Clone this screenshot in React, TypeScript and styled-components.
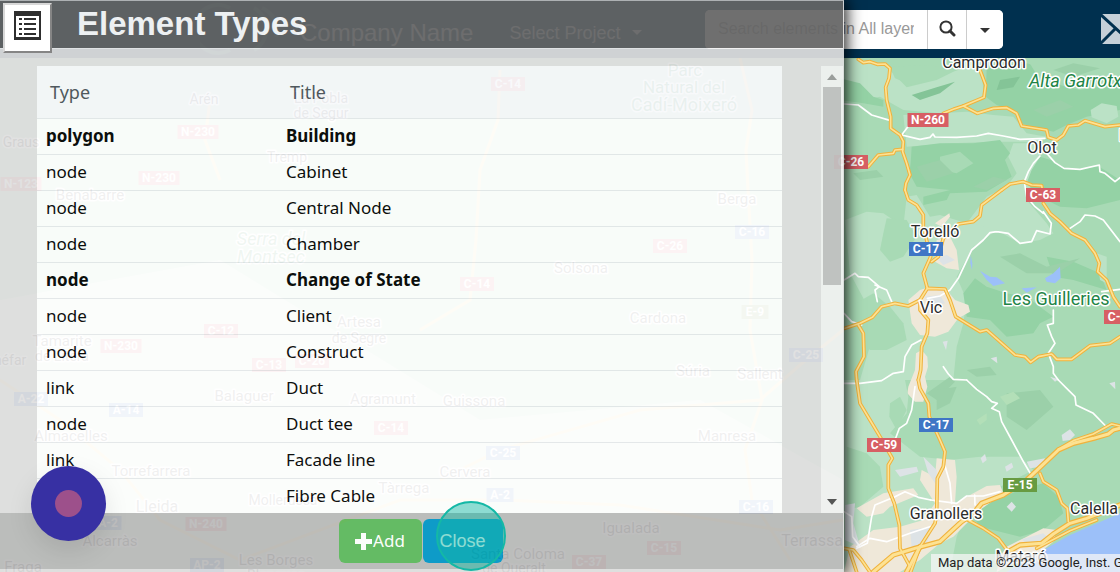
import React from "react";
import styled, { createGlobalStyle } from "styled-components";

const GlobalStyle = createGlobalStyle`
  *, *::before, *::after { box-sizing: border-box; }
  html, body { margin: 0; padding: 0; overflow: hidden; }
  body { font-family: "Liberation Sans", Arial, sans-serif; }
  button, input { font: inherit; }
`;

/* ---------- page frame ---------- */

const Page = styled.div`
  position: relative;
  display: flex;
  flex-direction: column;
  height: 100vh;
  overflow: hidden;
`;

const NavBar = styled.header`
  flex: none;
  display: flex;
  align-items: center;
  height: 58px;
  padding-left: 200px;
  background: #00304f;
  color: #fff;
  overflow: hidden;
`;

const Logo = styled.svg`
  flex: none;
  width: 84px;
  height: 52px;
  margin-right: 16px;
`;

const Company = styled.span`
  flex: none;
  font-size: 24px;
  line-height: 32px;
  padding-top: 7px;
  color: #dbe4ea;
`;

const ProjectButton = styled.button`
  flex: none;
  display: flex;
  align-items: center;
  gap: 12px;
  margin-left: 36px;
  padding: 7px 0 0;
  border: 0;
  background: none;
  color: #dbe4ea;
  font-size: 18px;
  line-height: 24px;
`;

const Caret = styled.span`
  width: 0;
  height: 0;
  border: 5px solid transparent;
  border-top-color: currentColor;
  border-bottom: 0;
`;

const SearchGroup = styled.form`
  flex: none;
  display: flex;
  height: 39px;
  margin-left: auto;
  border-radius: 5px;
  background: #fff;
  overflow: hidden;
`;

const SearchInput = styled.input`
  width: 222px;
  padding: 0 13px;
  border: 0;
  background: #fff;
  font-size: 16px;
  &::placeholder { color: #999; opacity: 1; }
`;

const SearchButton = styled.button<{ $width: number }>`
  display: flex;
  align-items: center;
  justify-content: center;
  width: ${(p) => p.$width}px;
  padding: 0;
  border: 0;
  border-left: 1px solid #ccc;
  background: #fff;
  color: #333;
`;

const SearchOptions = styled(SearchButton)`
  padding-top: 3px;
`;

const MailButton = styled.button`
  flex: none;
  margin: 0 -25px 0 98px;
  padding: 0;
  border: 0;
  background: none;
  line-height: 0;
`;

/* ---------- map ---------- */

const MapArea = styled.main`
  position: relative;
  flex: 1;
  min-height: 0;
  background: #a8dab5;
`;

const MapCanvas = styled.svg`
  display: block;
  width: 100%;
  height: 100%;
  font-family: Roboto, "Liberation Sans", sans-serif;
`;

const Attribution = styled.small`
  position: absolute;
  right: 0;
  bottom: 0;
  width: 189px;
  padding-left: 7px;
  overflow: hidden;
  white-space: nowrap;
  background: rgba(245, 245, 245, 0.75);
  color: #222;
  font: 13px/18px Roboto, "Liberation Sans", sans-serif;
`;

type Pts = string[];
interface TileData {
  y: number;
  areas: [string, string][];
  white: Pts;
  yellow: Pts;
  wide?: Pts;
}

const LIGHT = "#bbe2c6";
const DARK = "#94d2a5";
const MID = "#a8dab5";
const SHADE = "#9bd0a9";
const URBAN = "#efe8d9";
const GREY = "#dde3e6";
const WATER = "#9cc0f9";

const tiles: TileData[] = [
  {
    y: 0,
    areas: [
      [LIGHT, "0,175 60,178 140,200 200,262 290,240 340,215 395,195 425,215 432,290 370,318 300,340 190,330 120,290 60,300 0,260"],
      [MID, "150,200 260,195 330,205 290,235 215,255 165,235"],
      [DARK, "0,235 60,250 100,290 130,300 130,320 70,310 0,300"],
      [DARK, "440,205 560,190 840,265 840,330 740,350 680,375 640,395 548,372 530,335 470,315 437,290"],
      [MID, "560,175 840,175 840,250 720,270 600,240"],
      [LIGHT, "752,330 785,310 830,318 835,350 800,370 755,352"],
      [LIGHT, "190,345 380,335 460,345 520,350 560,400 620,410 600,425 470,425 330,430 200,440"],
      [LIGHT, "520,430 590,430 600,470 580,520 560,600 620,670 640,700 600,720 540,730 470,690 420,700 380,670 440,590 500,560 530,520 505,470"],
      [DARK, "215,440 300,430 400,430 480,420 510,460 495,480 515,530 440,575 330,580 320,600 250,615 250,590 330,570 230,560 208,520 212,490"],
      [MID, "300,470 360,455 400,490 350,520 300,510"],
      [DARK, "575,510 600,470 640,482 672,508 778,500 840,540 840,600 740,625 660,620 600,590 560,550"],
      [SHADE, "230,500 300,480 340,520 260,545"],
      [SHADE, "400,560 460,530 500,540 440,570"],
      [SHADE, "20,480 80,470 60,500"],
      [SHADE, "40,520 110,510 130,530 60,540"],
      ["#84c497", "215,285 290,262 345,245 300,280 240,300"],
      ["#84c497", "480,240 540,230 520,262 470,270"],
      [SHADE, "580,330 660,300 700,320 620,350"],
      [SHADE, "640,210 700,190 780,205 700,230"],
    ],
    white: [
      "12,312 55,315 95,345 152,362",
      "172,402 240,418 270,412 279,402 285,411 350,412 410,408 445,400 490,408 540,418 615,415",
      "600,468 580,490 565,515 553,545 560,590 585,620 610,640",
      "622,462 645,488 672,505 720,508 778,495 780,515 795,520 825,545 840,533",
      "185,405 210,372",
    ],
    yellow: [
      "55,178 70,188 90,185 112,193 135,192 150,205 147,235 137,262 140,300 152,350 152,385 180,405 190,425 188,455 200,490 210,525 198,550 195,570",
      "310,340 340,328 370,318 432,292 437,255 420,210",
      "370,318 412,340 460,325 500,323 530,340 545,378 620,390 625,412 650,420 670,405 685,378 715,375 735,362 795,380 840,375",
      "85,500 115,465 160,460 165,450 188,448",
      "485,570 510,552 550,545 575,555 605,557 612,600",
    ],
  },
  {
    y: 570,
    areas: [
      [LIGHT, "15,90 80,65 130,70 190,110 200,20 230,15 270,80 300,75 380,100 440,110 470,120 400,170 350,260 380,330 370,400 350,470 340,570 60,570 110,400 30,250"],
      [MID, "140,85 200,90 230,140 190,200 150,215 120,180 130,130"],
      [MID, "30,350 100,310 150,350 190,400 200,450 140,480 90,480 50,440"],
      [DARK, "405,265 440,290 500,310 560,320 640,380 600,400 580,430 500,440 450,390 380,380 370,310"],
      [DARK, "620,200 700,215 780,250 800,300 700,270 640,260"],
      [SHADE, "480,200 540,190 620,230 720,205 650,250 560,250"],
      [LIGHT, "770,190 800,200 800,280 780,270"],
      [URBAN, "285,100 328,70 330,80 305,110"],
      [URBAN, "290,150 330,140 350,180 357,240 320,235 285,215"],
      [GREY, "290,205 320,195 345,210 310,225"],
      [URBAN, "205,330 240,300 270,290 320,300 345,330 385,345 390,365 355,385 325,425 285,440 240,435 215,400"],
      [GREY, "255,320 300,315 315,340 270,350"],
      [URBAN, "228,490 245,480 262,500 264,530 255,560 262,590 250,635 225,635 202,610 205,590 225,540"],
      [WATER, "420,242 450,260 470,262 495,280 460,288 440,270"],
      [WATER, "615,265 640,250 660,230 662,265 645,280 620,275"],
      [WATER, "392,195 397,220 396,240 391,220"],
      [WATER, "545,295 590,292 560,308"],
      [SHADE, "260,610 330,560 345,575 290,630"],
      [SHADE, "380,540 450,530 470,555 410,560"],
      [GREY, "308,455 323,452 318,480"],
      [GREY, "452,505 470,500 472,520"],
      [GREY, "630,560 655,568 645,575"],
    ],
    white: [
      "262,325 300,318 330,300 355,265 395,180 430,150 450,128 470,125 505,130 540,160 575,155 590,122 630,132 634,100 610,65",
      "690,115 720,95 735,75 765,78 790,90 840,155",
      "12,270 45,250 55,260 85,262 118,290 105,300 112,335",
      "105,285 140,300 155,335",
      "640,360 640,400 622,405 635,440 645,460 625,490 640,530 640,550 655,570",
      "243,450 215,465 195,500 190,545 160,550 125,572 60,580 12,580",
      "310,530 325,552 340,568 380,570",
      "12,370 35,395 65,405",
      "785,305 840,298",
    ],
    yellow: [
      "195,0 205,30 230,45 250,75 250,110 272,200 250,250 262,295",
      "275,215 295,200 310,145 355,102 400,95 420,78 425,45 485,0",
      "15,415 60,400 97,382 125,350 165,340 205,348 240,330 262,295 315,297 330,330 347,380 420,425 440,420 525,495 555,500 572,517 595,500 635,492 650,508 695,508 750,467 810,460 840,440",
      "610,40 630,70 660,95 695,130 735,150 765,190 778,220 773,245 800,270 820,320 840,350",
      "55,405 70,430 72,500 48,545 50,570",
      "240,330 240,360 265,390 262,430 245,470 242,540 235,570",
    ],
  },
  {
    y: 1140,
    areas: [
      [LIGHT, "12,0 195,0 205,50 200,100 150,160 240,230 330,240 420,230 540,230 580,270 480,320 400,350 350,470 330,576 12,576"],
      [MID, "20,200 80,220 120,260 130,320 60,380 20,390"],
      [MID, "150,70 180,50 200,90 170,150 148,110"],
      [MID, "215,90 370,40 430,70 470,150 520,210 440,230 330,220 240,180"],
      [SHADE, "290,30 350,20 330,70 290,90"],
      [SHADE, "500,40 600,30 640,80 560,150 500,110"],
      ["#b3dfb8", "480,50 520,35 540,55 500,75"],
      ["#b3dfb8", "410,120 440,100 440,120 420,135"],
      [DARK, "420,380 540,330 610,310 655,350 670,400 610,450 540,470 420,440 400,410"],
      [MID, "370,440 430,450 500,520 480,560 330,576"],
      [URBAN, "290,235 345,240 350,290 345,370 400,340 440,318 480,315 490,340 420,390 390,420 340,470 300,490 240,540 180,576 12,576 30,500 100,450 180,440 250,420 285,370 240,300 245,270 285,290"],
      [URBAN, "50,385 130,340 220,325 235,345 150,380 130,400 80,410"],
      [GREY, "15,375 45,370 40,430 60,500 15,480"],
      [GREY, "165,270 230,260 235,275 180,290"],
      [GREY, "250,230 290,270 292,320 265,280"],
      [GREY, "210,450 280,440 260,490 215,500"],
      [GREY, "665,165 690,148 705,165 690,180 668,183"],
      [GREY, "422,235 435,222 440,240 428,250"],
      [GREY, "500,380 515,365 528,380 515,395"],
      [GREY, "560,245 615,235 605,260 570,265"],
      [GREY, "495,260 515,248 520,262 500,275"],
      [GREY, "808,10 825,5 826,28"],
      [URBAN, "500,500 560,470 610,445 650,450 640,485 590,525 500,560 470,576 480,530"],
      [GREY, "545,478 610,460 625,475 570,500"],
      [WATER, "500,576 600,515 690,465 840,400 840,576"],
    ],
    white: [
      "380,0 410,28 440,50 455,65 472,70 455,85 478,95 485,125 515,180 550,245 572,282",
      "655,0 680,25 705,50 708,75 760,100 797,138",
      "225,20 215,90 200,130 178,145 165,180",
      "315,258 330,310 335,370",
      "272,360 235,352 195,335 165,350 105,375 95,410 82,490 50,505",
      "272,360 350,370 380,348 430,348 480,335",
      "50,500 90,475 140,485 210,460 285,435",
      "12,395 35,410 38,470 60,500",
      "404,345 405,375",
    ],
    yellow: [
      "50,0 60,70 90,120 120,170 157,235 145,255 145,325 163,370 178,435 180,505 210,560",
      "235,0 240,25 265,70 268,110 300,180 315,215 310,260 292,295 290,400 285,430 240,500 212,576",
      "600,280 610,305 650,330 665,370 682,385 685,425",
      "380,418 430,445 475,475 505,515",
      "590,505 690,452 770,420",
      "12,505 40,510 65,540 90,576",
      "28,510 50,576",
    ],
    wide: [
      "100,576 160,525 225,505 300,485 365,425 400,400 425,370 490,345 560,300 600,262 655,210 700,190 760,175 805,162 820,150 840,145",
      "505,515 540,495 605,490 640,462 690,430 740,415 780,400 840,375",
      "200,576 240,500",
    ],
  },
];

const upperBranch = "655,208 700,182 760,162 815,132 840,138";
tiles[2].yellow.push(upperBranch);

const toPath = (p: string) => "M" + p.split(" ").join("L");

const placeTile = (y: number) => `translate(840 0) scale(0.33333) translate(0 ${y})`;

const TileAreas = ({ data }: { data: TileData }) => (
  <g transform={placeTile(data.y)}>
    {data.areas.map(([fill, pts], i) => (
      <polygon key={i} points={pts} fill={fill} />
    ))}
  </g>
);

interface RoadProps {
  data: TileData;
  kind: "white" | "yellow" | "wide";
  color: string;
  width: number;
}

const TileRoads = ({ data, kind, color, width }: RoadProps) => (
  <g
    transform={placeTile(data.y)}
    fill="none"
    stroke={color}
    strokeWidth={width}
    strokeLinejoin="round"
    strokeLinecap="round"
  >
    {(data[kind] ?? []).map((p) => <path key={p} d={toPath(p)} />)}
  </g>
);

const roadPasses: Omit<RoadProps, "data">[] = [
  { kind: "white", color: "#fff", width: 5 },
  { kind: "yellow", color: "#f0b23c", width: 11 },
  { kind: "wide", color: "#f0b23c", width: 16 },
  { kind: "yellow", color: "#fde293", width: 5 },
  { kind: "wide", color: "#fde293", width: 9 },
];

/* Towns: name, centre x, centre y, size */
const towns: [string, number, number, number][] = [
  ["Camprodon", 984, 63, 16], ["Olot", 1042, 148, 16], ["Torelló", 935, 232, 16],
  ["Vic", 931, 308, 16], ["Granollers", 946, 514, 16], ["Mataró", 1021, 557, 16],
  ["Calella", 1094, 509, 16], ["Banyoles", 1151, 136, 16],
  ["Arén", 204, 99, 14], ["La Pobla", 321, 98, 14], ["de Segur", 321, 113, 14],
  ["Graus", 21, 142, 14], ["Tremp", 287, 157, 14], ["Benabarre", 90, 195, 15],
  ["Artesa", 359, 322, 15], ["de Segre", 359, 338, 14], ["Tamarite", 62, 341, 15],
  ["de Litera", 62, 356, 14], ["Binéfar", 4, 360, 14], ["Balaguer", 244, 396, 15],
  ["Agramunt", 383, 399, 15], ["Guissona", 474, 401, 15], ["Berga", 737, 199, 15],
  ["Solsona", 581, 268, 15], ["Cardona", 658, 318, 15], ["Súria", 693, 371, 15],
  ["Sallent", 760, 374, 15], ["Almacelles", 71, 436, 15], ["Torrefarrera", 151, 471, 15],
  ["Lleida", 157, 507, 16], ["Mollerussa", 283, 500, 14], ["Tàrrega", 404, 488, 15],
  ["Cervera", 465, 472, 15], ["Manresa", 727, 436, 15], ["Igualada", 631, 528, 15],
  ["Terrassa", 812, 541, 16], ["Alcarràs", 110, 541, 15], ["Fraga", 23, 567, 15],
  ["Les Borges", 276, 560, 15], ["Blanques", 276, 575, 14],
  ["Santa Coloma", 518, 554, 15], ["de Queralt", 514, 568, 14],
];

const parks: [string, number, number, number, boolean][] = [
  ["Alta Garrotxa", 1080, 81, 18, true], ["Les Guilleries", 1056, 299, 18, false],
  ["Parc", 685, 70, 17, false], ["Natural del", 684, 87, 17, false],
  ["Cadí-Moixeró", 684, 105, 18, false], ["Serra del", 271, 239, 18, true],
  ["Montsec", 271, 257, 18, true],
];

const RED = "#d75f64";
const BLUE = "#3f76c5";
const GREEN = "#679b41";

const shields: [string, number, number, string][] = [
  ["N-260", 928, 120, RED], ["C-26", 851, 162, RED], ["C-63", 1043, 195, RED],
  ["C-17", 926, 249, BLUE], ["C-35", 1121, 317, RED], ["C-17", 936, 425, BLUE],
  ["C-59", 884, 445, RED], ["E-15", 1020, 485, GREEN],
  ["C-14", 508, 84, RED], ["N-230", 198, 132, RED], ["N-123", 21, 184, RED],
  ["N-230", 159, 178, RED], ["C-16", 752, 232, BLUE], ["C-26", 670, 246, RED],
  ["C-14", 477, 284, RED], ["C-12", 221, 331, RED], ["N-230", 121, 346, RED],
  ["C-13", 269, 365, RED], ["C-26", 312, 361, RED], ["A-22", 31, 399, BLUE],
  ["A-14", 126, 410, BLUE], ["C-14", 391, 428, RED], ["E-9", 755, 312, GREEN],
  ["C-25", 806, 355, BLUE], ["C-25", 503, 453, BLUE], ["A-2", 500, 495, BLUE],
  ["C-16", 756, 507, BLUE], ["A-2", 108, 523, BLUE], ["N-240", 206, 524, RED],
  ["AP-2", 207, 565, BLUE], ["C-15", 664, 548, RED], ["C-37", 589, 562, RED],
];

/* Stretches of road in the western half of the map. */
const westRoads = [
  "M740 58L752 110L746 150L748 190L752 260L750 330L762 400L745 450L752 500L790 560",
  "M500 70L498 120L480 170L476 240L470 300L420 330",
  "M210 100L205 140L220 180",
  "M0 380L60 420L120 470L160 520L240 560L400 500L500 500L620 505L780 530L843 520",
  "M843 330L800 365L760 400L640 410L500 450L440 480",
];

function RegionMap() {
  return (
    <MapCanvas viewBox="0 58 1120 514" preserveAspectRatio="xMinYMin slice" role="img" aria-label="Map">
      <polygon points="0,58 843,58 843,572 0,572" fill={MID} />
      <polygon points="0,300 220,260 480,420 700,400 843,480 843,572 0,572" fill="#d3e8d3" />
      <g fill="none" stroke="#fbd98a" strokeWidth={3}>
        {westRoads.map((d) => <path key={d} d={d} />)}
      </g>
      {tiles.map((t) => <TileAreas key={t.y} data={t} />)}
      {roadPasses.map((pass, i) => (
        <g key={i}>
          {tiles.map((t) => <TileRoads key={t.y} data={t} {...pass} />)}
        </g>
      ))}
      <g textAnchor="middle" stroke="#fff" strokeWidth={3} strokeLinejoin="round" paintOrder="stroke">
        {towns.map(([name, x, y, size]) => (
          <text key={name} x={x} y={y + 5} fontSize={size} fill="#2b2b2b">{name}</text>
        ))}
        {parks.map(([name, x, y, size, italic]) => (
          <text key={name} x={x} y={y + 6} fontSize={size} fill="#1e8446" fontStyle={italic ? "italic" : "normal"}>
            {name}
          </text>
        ))}
      </g>
      {shields.map(([name, x, y, fill]) => {
        const w = name.length * 7 + 6;
        return (
          <g key={name + x + y}>
            <rect x={x - w / 2} y={y - 7} width={w} height={14} fill={fill} />
            <text x={x} y={y + 4} textAnchor="middle" fontSize={12} fontWeight={700} fill="#fff">{name}</text>
          </g>
        );
      })}
    </MapCanvas>
  );
}

/* ---------- dialog ---------- */

const Dialog = styled.section`
  position: absolute;
  top: 0;
  left: 0;
  display: flex;
  flex-direction: column;
  width: calc(100% - 276px);
  height: 100%;
  padding-bottom: 3px;
  border-top: 1px solid #bbb;
  border-right: 1px solid #ddd;
  background: #dfdfdf;
  box-shadow: 0 0 15px 2px #000;
  opacity: 0.93;
`;

const DialogHeader = styled.div`
  flex: none;
  height: 48px;
  padding: 3px 0 0 77px;
  background: #656565;
  border-bottom: 1px solid #f0f0f0;
`;

const DialogTitle = styled.h1`
  margin: 0;
  padding-top: 2px;
  font-size: 33px;
  line-height: 36px;
  color: #fff;
`;

const MenuButton = styled.button`
  position: absolute;
  top: 3px;
  left: 3px;
  display: flex;
  justify-content: center;
  width: 49px;
  height: 50px;
  padding: 6px 0 0;
  border: 2px solid;
  border-color: #d8d8d8 #858585 #858585 #d8d8d8;
  background: #fff;
`;

const DialogBody = styled.div`
  flex: 1;
  display: flex;
  min-height: 0;
  padding: 17px 0 0 37px;
  overflow: hidden;
`;

const TableFrame = styled.div`
  flex: 1;
  margin-right: 39px;
  overflow: hidden;
`;

const TypeTable = styled.table`
  width: 100%;
  table-layout: fixed;
  border-collapse: collapse;
  background: #fff;
  font-family: "Noto Sans", "Open Sans", sans-serif;
  font-size: 17px;
  line-height: 24px;
  color: #000;
`;

const HeadCell = styled.th<{ $width?: number }>`
  width: ${(p) => (p.$width ? `${p.$width}px` : "auto")};
  height: 52px;
  padding: 0 13px;
  background: #f8f9fb;
  text-align: left;
  font-size: 18px;
  font-weight: 400;
  color: #495057;
`;

const Row = styled.tr<{ $strong?: boolean }>`
  font-weight: ${(p) => (p.$strong ? 700 : 400)};
`;

const Cell = styled.td`
  height: 36px;
  padding: 0 9px;
  border-top: 1px solid #e6e9eb;
`;

const ScrollTrack = styled.div`
  flex: none;
  display: flex;
  flex-direction: column;
  align-items: center;
  width: 22px;
  padding: 8px 0;
  background: #f2f2f2;
`;

const ScrollArrow = styled.span<{ $down?: boolean }>`
  width: 0;
  height: 0;
  border: 5px solid transparent;
  ${(p) =>
    p.$down
      ? "border-bottom: 0; border-top: 6px solid #4c4c4c; margin-top: auto;"
      : "border-top: 0; border-bottom: 6px solid #9a9a9a;"}
`;

const ScrollThumb = styled.span`
  width: 18px;
  height: 198px;
  margin-top: 7px;
  background: #c1c1c1;
`;

const DialogFooter = styled.div`
  flex: none;
  display: flex;
  align-items: center;
  justify-content: center;
  gap: 1px;
  height: 56px;
  padding-right: 2px;
  background: #bababa;
`;

const ActionButton = styled.button<{ $color: string; $width: number }>`
  display: flex;
  align-items: center;
  justify-content: center;
  gap: 1px;
  width: ${(p) => p.$width}px;
  height: 44px;
  padding: 0;
  border: 0;
  border-radius: 6px;
  background: ${(p) => p.$color};
  color: #fff;
  font-family: "Noto Sans", "Open Sans", sans-serif;
  font-size: 17px;
  line-height: 24px;
`;

const CloseLabel = styled.span`
  font-family: "Liberation Sans", Arial, sans-serif;
  font-size: 18px;
`;

/* ---------- floating markers ---------- */

const ClickRing = styled.span`
  position: absolute;
  left: calc(50% - 124px);
  bottom: 1px;
  width: 70px;
  height: 70px;
  border: 2px solid #14b8a6;
  border-radius: 50%;
  background: rgba(20, 184, 166, 0.48);
  pointer-events: none;
`;

const RecordButton = styled.button`
  position: absolute;
  left: 31px;
  bottom: 31px;
  display: flex;
  align-items: center;
  justify-content: center;
  width: 75px;
  height: 75px;
  padding: 0;
  border: 0;
  border-radius: 50%;
  background: #3730a3;
  box-shadow: 0 10px 26px rgba(0, 0, 0, 0.1);
`;

const RecordDot = styled.span`
  width: 27px;
  height: 27px;
  border-radius: 50%;
  background: #9d508b;
`;

interface ElementType {
  type: string;
  title: string;
  strong?: boolean;
}

const elementTypes: ElementType[] = [
  { type: "polygon", title: "Building", strong: true },
  { type: "node", title: "Cabinet" },
  { type: "node", title: "Central Node" },
  { type: "node", title: "Chamber" },
  { type: "node", title: "Change of State", strong: true },
  { type: "node", title: "Client" },
  { type: "node", title: "Construct" },
  { type: "link", title: "Duct" },
  { type: "node", title: "Duct tee" },
  { type: "link", title: "Facade line" },
  { type: "", title: "Fibre Cable" },
];

const ListIcon = () => (
  <svg width="27" height="29" viewBox="0 0 27 29" fill="#2e2e2e" aria-hidden="true">
    <path fillRule="evenodd" d="M0 0H27V29H0ZM2 5V26H25V5Z" />
    <path d="M5 7h3v2H5zM5 12h3v2H5zM5 17h3v2H5zM5 22h3v2H5zM10 7h12v2H10zM10 12h12v2H10zM10 17h12v2H10zM10 22h12v2H10z" />
  </svg>
);

export default function App() {
  return (
    <Page>
      <GlobalStyle />
      <NavBar>
        <Logo viewBox="0 0 84 52" aria-hidden="true" fill="none" stroke="#1d5f68" strokeWidth="4">
          <path d="M30 5A24 24 0 1 0 30 47M54 5A24 24 0 0 1 54 47M62 5A24 24 0 0 1 76 34" />
        </Logo>
        <Company>Company Name</Company>
        <ProjectButton type="button">Select Project <Caret /></ProjectButton>
        <SearchGroup onSubmit={(e) => e.preventDefault()}>
          <SearchInput type="text" aria-label="Search elements" placeholder="Search elements in All layers" />
          <SearchButton $width={39} type="submit" aria-label="Search">
            <svg width="18" height="18" viewBox="0 0 18 18" fill="none" stroke="#333" aria-hidden="true">
              <circle cx="8" cy="7" r="5.6" strokeWidth="2" />
              <path d="M12 11L16 15" strokeWidth="3" strokeLinecap="round" />
            </svg>
          </SearchButton>
          <SearchOptions $width={37} type="button" aria-label="Search options"><Caret /></SearchOptions>
        </SearchGroup>
        <MailButton type="button" aria-label="Messages">
          <svg width="44" height="30" viewBox="0 0 44 30" aria-hidden="true">
            <path d="M0 0H44V30H0Z" fill="#c5d0d8" />
            <path d="M-1 0L22 21L45 0M-1 30L15 14M45 30L29 14" fill="none" stroke="#00304f" strokeWidth="3" />
          </svg>
        </MailButton>
      </NavBar>

      <MapArea>
        <RegionMap />
        <Attribution>Map data ©2023 Google, Inst. G</Attribution>
      </MapArea>

      <Dialog role="dialog" aria-labelledby="dialog-title">
        <DialogHeader>
          <DialogTitle id="dialog-title">Element Types</DialogTitle>
        </DialogHeader>
        <DialogBody>
          <TableFrame>
            <TypeTable>
              <thead>
                <tr>
                  <HeadCell $width={240}>Type</HeadCell>
                  <HeadCell>Title</HeadCell>
                </tr>
              </thead>
              <tbody>
                {elementTypes.map((row) => (
                  <Row key={row.title} $strong={row.strong}>
                    <Cell>{row.type}</Cell>
                    <Cell>{row.title}</Cell>
                  </Row>
                ))}
              </tbody>
            </TypeTable>
          </TableFrame>
          <ScrollTrack aria-hidden="true">
            <ScrollArrow />
            <ScrollThumb />
            <ScrollArrow $down />
          </ScrollTrack>
        </DialogBody>
        <DialogFooter>
          <ActionButton type="button" $color="#5cb85c" $width={83}>
            <svg width="17" height="17" viewBox="0 0 17 17" fill="#fff" aria-hidden="true">
              <path d="M6 0h5v6h6v5h-6v6H6v-6H0V6h6z" />
            </svg>
            Add
          </ActionButton>
          <ActionButton type="button" $color="#0096c8" $width={80}>
            <CloseLabel>Close</CloseLabel>
          </ActionButton>
        </DialogFooter>
      </Dialog>

      <MenuButton type="button" aria-label="List"><ListIcon /></MenuButton>
      <RecordButton type="button" aria-label="Record"><RecordDot /></RecordButton>
      <ClickRing />
    </Page>
  );
}
